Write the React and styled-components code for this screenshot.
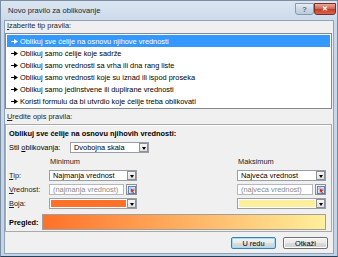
import React from 'react'
import styled, { createGlobalStyle } from 'styled-components'

const GlobalStyle = createGlobalStyle`
  html, body { margin: 0; padding: 0; background: #ffffff; }
  body { font-family: "Liberation Sans", Arial, sans-serif; }
  * { box-sizing: border-box; }
`

const ruleTypes = [
  'Oblikuj sve ćelije na osnovu njihove vrednosti',
  'Oblikuj samo ćelije koje sadrže',
  'Oblikuj samo vrednosti sa vrha ili dna rang liste',
  'Oblikuj samo vrednosti koje su iznad ili ispod proseka',
  'Oblikuj samo jedinstvene ili duplirane vrednosti',
  'Koristi formulu da bi utvrdio koje ćelije treba oblikovati',
]

const MIN_COLOR = '#ff7128'
const MAX_COLOR = '#ffef9c'

const RowArrow = ({ light }) => (
  <svg width="7" height="5" viewBox="0 0 7 5">
    <rect x="0" y="2" width="3" height="1" fill={light ? '#fff' : '#000'} />
    <polygon points="3,0 7,2.5 3,5" fill={light ? '#fff' : '#000'} />
  </svg>
)

const RefIcon = () => (
  <svg width="8" height="8" viewBox="0 0 8 8">
    <rect x="0.5" y="0.5" width="7" height="7" fill="#dce8f7" stroke="#5b7fb0" />
    <line x1="0.5" y1="3" x2="7.5" y2="3" stroke="#9db6d8" />
    <line x1="3" y1="0.5" x2="3" y2="7.5" stroke="#9db6d8" />
    <polygon points="3,3 7,4 5,5 6,7 5,7.5 4,5.5 3,6.5" fill="#d62a1c" />
  </svg>
)

const Dropdown = ({ children, width }) => (
  <Select $width={width}>
    <SelectText>{children}</SelectText>
    <DropButton>
      <Triangle />
    </DropButton>
  </Select>
)

const ColorDropdown = ({ color }) => (
  <Select>
    <Swatch $color={color} />
    <DropButton>
      <Triangle />
    </DropButton>
  </Select>
)

const ValueInput = ({ placeholder }) => (
  <ValueWrap>
    <Input>{placeholder}</Input>
    <RefButton>
      <RefIcon />
    </RefButton>
  </ValueWrap>
)

const App = () => {
  return (
    <>
      <GlobalStyle />
      <Window>
        <TitleBar>
          <Title>Novo pravilo za oblikovanje</Title>
          <Caption>
            <HelpButton>?</HelpButton>
            <CloseButton>✕</CloseButton>
          </Caption>
        </TitleBar>
        <Body>
          <Label>
            <u>I</u>zaberite tip pravila:
          </Label>
          <ListBox>
            {ruleTypes.map((r, i) => (
              <ListRow key={r} $selected={i === 0}>
                <RowArrow light={i === 0} />
                <span>{r}</span>
              </ListRow>
            ))}
          </ListBox>
          <Label $top={3}>
            <u>U</u>redite opis pravila:
          </Label>
          <Group>
            <GroupHeading>Oblikuj sve ćelije na osnovu njihovih vrednosti:</GroupHeading>
            <StyleRow>
              <StyleLabel>
                Stil <u>o</u>blikovanja:
              </StyleLabel>
              <Dropdown width={79}>Dvobojna skala</Dropdown>
            </StyleRow>
            <FormGrid>
              <span />
              <ColumnHead>Minimum</ColumnHead>
              <span />
              <ColumnHead>Maksimum</ColumnHead>

              <FieldLabel>
                <u>T</u>ip:
              </FieldLabel>
              <Dropdown>Najmanja vrednost</Dropdown>
              <span />
              <Dropdown>Najveća vrednost</Dropdown>

              <FieldLabel>
                <u>V</u>rednost:
              </FieldLabel>
              <ValueInput placeholder="(najmanja vrednost)" />
              <span />
              <ValueInput placeholder="(najveća vrednost)" />

              <FieldLabel>
                <u>B</u>oja:
              </FieldLabel>
              <ColorDropdown color={MIN_COLOR} />
              <span />
              <ColorDropdown color={MAX_COLOR} />
            </FormGrid>
            <PreviewRow>
              <PreviewLabel>Pregled:</PreviewLabel>
              <PreviewBar $from={MIN_COLOR} $to={MAX_COLOR} />
            </PreviewRow>
          </Group>
          <Footer>
            <Button $default>U redu</Button>
            <Button>Otkaži</Button>
          </Footer>
        </Body>
      </Window>
    </>
  )
}

const Window = styled.div`
  width: 338px;
  height: 257px;
  display: flex;
  flex-direction: column;
  padding: 0 3px 2px 3px;
  border: 1px solid #7a8da3;
  border-bottom-color: #27425a;
  background: linear-gradient(#dbe6f2, #c9d8e9 22px, #c4d4e6);
  font-size: 7.4px;
  color: #000;
`
const TitleBar = styled.div`
  height: 19px;
  display: flex;
  align-items: center;
  justify-content: space-between;
`
const Title = styled.div`
  padding-left: 4px;
  font-size: 7.6px;
  color: #1b2733;
`
const Caption = styled.div`
  display: flex;
  align-self: flex-start;
  margin-top: 2px;
  margin-right: -2px;
`
const CaptionButton = styled.div`
  height: 12px;
  display: flex;
  align-items: center;
  justify-content: center;
  border-radius: 0 0 3px 3px;
  font-weight: bold;
`
const HelpButton = styled(CaptionButton)`
  width: 19px;
  border: 1px solid #8799ae;
  background: linear-gradient(#e6edf5, #cbd7e5 50%, #bccadb);
  color: #50627a;
  font-size: 8px;
  text-shadow: 0 0 1px #fff;
`
const CloseButton = styled(CaptionButton)`
  width: 22px;
  border: 1px solid #7c2c22;
  background: linear-gradient(#e9a99b, #d16a55 45%, #c2412a 55%, #d5644e);
  color: #fff;
  font-size: 7px;
`
const Body = styled.div`
  flex: 1;
  display: flex;
  flex-direction: column;
  background: #f0f0f0;
  border: 1px solid #8ea3ba;
  padding: 0 1px 0 0;
`
const Label = styled.div`
  height: 10px;
  line-height: 10px;
  margin: ${(p) => p.$top || 0}px 0 2px 2px;
  color: #1e1e1e;
  u { text-decoration-thickness: 1px; text-underline-offset: 1px; }
`
const ListBox = styled.div`
  background: #fff;
  border: 1px solid #828790;
  padding: 1px;
  height: 76px;
`
const ListRow = styled.div`
  height: 12px;
  display: flex;
  align-items: center;
  gap: 2px;
  padding-left: 4px;
  background: ${(p) => (p.$selected ? '#3399ff' : 'transparent')};
  color: ${(p) => (p.$selected ? '#fff' : '#000')};
`
const Group = styled.div`
  border: 1px solid #a9a9a9;
  box-shadow: inset 1px 1px 0 #fff;
  padding: 4px 5px 2px 3px;
  height: 108px;
`
const GroupHeading = styled.div`
  height: 10px;
  line-height: 10px;
  font-weight: bold;
`
const StyleRow = styled.div`
  display: flex;
  align-items: center;
  margin-top: 3px;
`
const StyleLabel = styled.div`
  width: 61px;
`
const Select = styled.div`
  width: ${(p) => (p.$width ? `${p.$width}px` : '100%')};
  height: 11px;
  display: flex;
  align-items: center;
  background: #fff;
  border: 1px solid #9a9ea6;
`
const SelectText = styled.div`
  flex: 1;
  padding-left: 3px;
  white-space: nowrap;
  overflow: hidden;
`
const DropButton = styled.div`
  width: 9px;
  height: 9px;
  margin: 0 0 0 1px;
  display: flex;
  align-items: center;
  justify-content: center;
  border: 1px solid #8d9196;
  background: linear-gradient(#f6f6f6, #e2e2e2);
`
const Triangle = styled.div`
  width: 0;
  height: 0;
  border-left: 2.5px solid transparent;
  border-right: 2.5px solid transparent;
  border-top: 3px solid #000;
  margin-top: 1px;
`
const Swatch = styled.div`
  flex: 1;
  height: 7px;
  margin-left: 1px;
  background: ${(p) => p.$color};
`
const FormGrid = styled.div`
  display: grid;
  grid-template-columns: 40px 88px 1fr 89px;
  grid-auto-rows: 11px;
  row-gap: 3px;
  align-items: center;
  margin-top: 3px;
`
const ColumnHead = styled.div`
  padding-left: 1px;
  color: #1e1e1e;
`
const FieldLabel = styled.div`
  color: #1e1e1e;
`
const ValueWrap = styled.div`
  display: flex;
  align-items: center;
  gap: 2px;
`
const Input = styled.div`
  flex: 1;
  height: 11px;
  line-height: 9px;
  padding-left: 3px;
  background: #fff;
  border: 1px solid #b5b8bd;
  color: #8a8a8a;
  white-space: nowrap;
`
const RefButton = styled.div`
  width: 11px;
  height: 11px;
  display: flex;
  align-items: center;
  justify-content: center;
  border: 1px solid #8d9196;
  background: linear-gradient(#f4f4f4, #dcdcdc);
`
const PreviewRow = styled.div`
  display: flex;
  align-items: center;
  margin-top: 5px;
`
const PreviewLabel = styled.div`
  width: 33px;
  font-weight: bold;
`
const PreviewBar = styled.div`
  flex: 1;
  height: 16px;
  border: 1px solid #a0a0a0;
  background: linear-gradient(to right, ${(p) => p.$from}, ${(p) => p.$to});
`
const Footer = styled.div`
  display: flex;
  justify-content: flex-end;
  gap: 7px;
  padding: 5px 4px 0 0;
`
const Button = styled.div`
  width: 45px;
  height: 12px;
  display: flex;
  align-items: center;
  justify-content: center;
  border-radius: 2px;
  border: 1px solid ${(p) => (p.$default ? '#3c7fb1' : '#707070')};
  box-shadow: ${(p) => (p.$default ? 'inset 0 0 0 1px #9fdcf7' : 'inset 0 0 0 1px #fcfcfc')};
  background: linear-gradient(#f2f2f2, #ebebeb 45%, #dddddd 50%, #cfcfcf);
`

export default App
